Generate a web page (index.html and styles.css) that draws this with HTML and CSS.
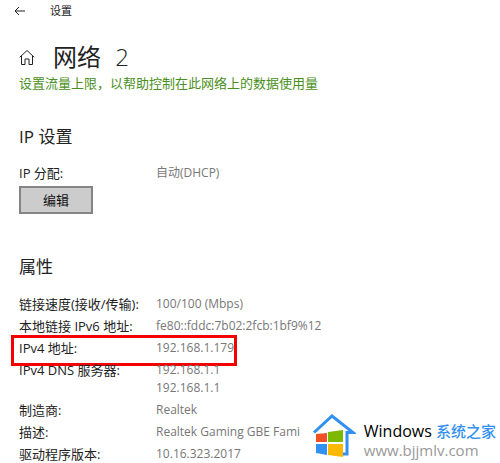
FILE: index.html
```html
<!DOCTYPE html>
<html lang="zh-CN">
<head>
<meta charset="UTF-8">
<title>设置</title>
<link rel="stylesheet" href="styles.css">
</head>
<body>
<header class="titlebar">
    <button class="back" type="button" aria-label="返回">
        <svg width="12" height="10" viewBox="0 0 12 10"><path d="M11 5H1M5 1L1 5l4 4"/></svg>
    </button>
    <span class="app-name">设置</span>
</header>
<main class="page">
    <div class="heading">
        <svg class="home" width="16" height="17" viewBox="0 0 16 17"><path d="M.7 8.3L8 1.5l7.300 6.800M2.500 7v8.500h3.500V10h4v5.500h3.500V7"/></svg>
        <h1>网络 <span>2</span></h1>
    </div>
    <a class="limit" href="#">设置流量上限，以帮助控制在此网络上的数据使用量</a>

    <h2 class="ip-title">IP 设置</h2>
    <dl class="list">
        <div class="row"><dt>IP 分配:</dt><dd>自动(DHCP)</dd></div>
    </dl>
    <button class="edit" type="button">编辑</button>

    <h2 class="prop-title">属性</h2>
    <dl class="list">
        <div class="row"><dt>链接速度(接收/传输):</dt><dd>100/100 (Mbps)</dd></div>
        <div class="row"><dt>本地链接 IPv6 地址:</dt><dd>fe80::fddc:7b02:2fcb:1bf9%12</dd></div>
        <div class="row marked"><dt>IPv4 地址:</dt><dd>192.168.1.179</dd></div>
        <div class="row"><dt>IPv4 DNS 服务器:</dt><dd>192.168.1.1<br>192.168.1.1</dd></div>
        <div class="row"><dt>制造商:</dt><dd>Realtek</dd></div>
        <div class="row"><dt>描述:</dt><dd>Realtek Gaming GBE Fami</dd></div>
        <div class="row"><dt>驱动程序版本:</dt><dd>10.16.323.2017</dd></div>
    </dl>
</main>
<div class="brand">
    <svg width="44" height="44" viewBox="0 0 44 44">
        <path d="M2 18.500L20 2l21 16.500h-6V40h-8" fill="none" stroke="#3290f0" stroke-width="3"/>
        <path fill="#f05023" d="M4 20l11-1v9H4z"/>
        <path fill="#7db900" d="M16 18l15-2v12H16z"/>
        <path fill="#3290f0" d="M4 30h11v11L4 39z"/>
        <path fill="#fdb900" d="M16 30h15v13l-15-2z"/>
    </svg>
    <div class="brand-text">
        <div class="brand-name">Windows <span>系统之家</span></div>
        <div class="brand-url">www.bjjmlv.com</div>
    </div>
</div>
</body>
</html>
```
FILE: styles.css
```css
body{
    margin: 0;
    background: #fff;
    color: #222;
    font: 12px/18px "Open Sans", "Noto Sans CJK SC", sans-serif;
    overflow: hidden;
}
h1, h2, dl, dd{
    margin: 0;
    font-weight: normal;
}
.titlebar{
    display: flex;
    align-items: center;
    gap: 24px;
    height: 22px;
    padding-left: 14px;
}
.back{
    display: flex;
    padding: 0;
    border: none;
    background: none;
}
.back svg, .home{
    fill: none;
    stroke: #222;
}
.app-name{
    font-size: 11px;
}
.page{
    padding: 18px 19px 0;
}
.heading{
    display: flex;
    align-items: center;
    gap: 18px;
}
h1{
    font-size: 24px;
    line-height: 34px;
}
h1 span{
    margin-left: 8px;
    font-weight: 300;
}
.limit{
    display: block;
    color: #4a9020;
    font-size: 13px;
    text-decoration: none;
}
h2{
    font-size: 17px;
    line-height: 26px;
}
.ip-title{
    margin: 32px 0 14px;
}
.prop-title{
    margin: 40px 0 15px;
}
.list{
    display: grid;
    gap: 4px;
}
.row{
    position: relative;
    display: grid;
    grid-template-columns: 137px 1fr;
}
dt{
    font-size: 13px;
}
dd{
    color: #777;
}
/* red frame round the address, over the next row */
.marked::after{
    content: "";
    position: absolute;
    top: -4px;
    left: -8px;
    width: 220px;
    height: 25px;
    border: 3px solid #f50000;
}
.edit{
    display: block;
    margin-top: 4px;
    padding: 3px 22px;
    border: 2px solid #858585;
    background: #ccc;
    color: #111;
    font: inherit;
    font-size: 13px;
}
.brand{
    position: absolute;
    right: 4px;
    bottom: 5px;
    display: flex;
    gap: 8px;
}
.brand-text{
    padding-top: 6px;
}
.brand-name{
    color: #000;
    font-size: 16px;
    font-weight: 500;
    line-height: 22px;
}
.brand-name span{
    color: #3290f0;
    font-size: 15px;
}
.brand-url{
    color: #999;
    font-size: 15px;
    line-height: 16px;
}
```
